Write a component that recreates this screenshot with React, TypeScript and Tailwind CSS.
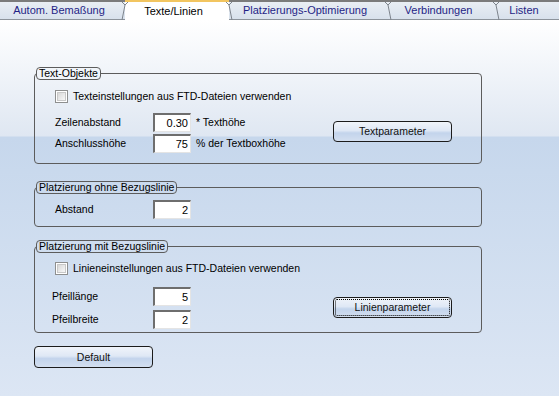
import React from "react";

type Tab = { label: string; width: string; active?: boolean; sep?: "left" | "right" };

const tabs: Tab[] = [
  { label: "Autom. Bemaßung", width: "w-[125px]" },
  { label: "Texte/Linien", width: "w-[104px]", active: true, sep: "left" },
  { label: "Platzierungs-Optimierung", width: "w-[159px]", sep: "right" },
  { label: "Verbindungen", width: "w-[108px]", sep: "right" },
  { label: "Listen", width: "w-[63px]", sep: "right" },
];

function TabSeparator({ dir }: { dir: "left" | "right" }) {
  // little "Y" on top of a slanted edge
  const bottomX = dir === "left" ? 1 : 7;
  return (
    <svg width="8" height="18" viewBox="0 0 8 18" className="absolute left-[-4px] top-0">
      <path d={`M1 0 L4 3 L7 0 M4 3 L${bottomX} 18`} stroke="#7d848c" strokeWidth="1" fill="none" />
    </svg>
  );
}

function TabBar() {
  return (
    <div className="flex h-[20px] text-[11px]">
      {tabs.map((t) => (
        <div
          key={t.label}
          className={
            "relative flex h-[20px] items-center justify-center pr-[7px] border-t-2 " +
            t.width +
            " " +
            (t.active
              ? "bg-white border-t-[#f2c560] text-black"
              : "border-t-[#7b7b7b] border-b border-b-[#8c939b] bg-[linear-gradient(to_bottom,#e9eef4,#d8e1ec)] text-[#1f1f86]")
          }
        >
          {t.sep && <TabSeparator dir={t.sep} />}
          <span className="leading-none">{t.label}</span>
        </div>
      ))}
    </div>
  );
}

function GroupBox({ title, className, children }: { title: string; className: string; children: React.ReactNode }) {
  return (
    <fieldset className={"ml-[34px] w-[448px] border border-[#5c5c5c] rounded-[4px] " + className}>
      <legend className="ml-[1px] h-[13px] px-[2px] border border-[#5c5c5c] rounded-[4px] leading-[11px]">{title}</legend>
      {children}
    </fieldset>
  );
}

function CheckRow({ label, className }: { label: string; className: string }) {
  return (
    <div className={"flex items-center gap-[5px] h-[13px] " + className}>
      <span className="w-[13px] h-[13px] border border-[#8e8f8f] p-[1px] bg-white">
        <span className="block w-full h-full border border-[#c8c8c8] bg-[linear-gradient(135deg,#d8d8d8,#f8f8f8)]" />
      </span>
      <span className="leading-none">{label}</span>
    </div>
  );
}

function NumField({ value }: { value: string }) {
  return (
    <div className="w-[38px] h-[19px] bg-white border-t-2 border-l-2 border-t-[#6e6e6e] border-l-[#6e6e6e] border-r border-b border-r-[#e4e4e4] border-b-[#e4e4e4] flex items-center justify-end pr-[2px] leading-none text-[11px]">
      {value}
    </div>
  );
}

function Row({ label, value, unit, labelW }: { label: string; value: string; unit?: string; labelW: string }) {
  return (
    <div className="flex items-center h-[19px]">
      <span className={"leading-none " + labelW}>{label}</span>
      <NumField value={value} />
      {unit && <span className="ml-[5px] leading-none">{unit}</span>}
    </div>
  );
}

function PushButton({ label, focused, className }: { label: string; focused?: boolean; className: string }) {
  return (
    <button
      className={
        "w-[119px] border border-[#1c1c1c] rounded-[4px] bg-[linear-gradient(to_bottom,#f0f4fa_0%,#dfe8f5_45%,#c3d4ec_58%,#d3dff0_100%)] text-[#101010] leading-none " +
        (focused ? "outline-1 outline-dotted outline-black outline-offset-[-3px] " : "") +
        className
      }
    >
      {label}
    </button>
  );
}

export default function App() {
  return (
    <div className="w-[559px] h-[396px] overflow-hidden font-['Liberation_Sans',Arial,sans-serif] text-[10.5px] text-black bg-white">
      <TabBar />
      <div className="h-[376px] flex flex-col bg-[linear-gradient(to_bottom,#ffffff_0px,#dfe7f2_116px,#c6d7ec_117px,#dce6f4_100%)]">
        <GroupBox title="Text-Objekte" className="mt-[47px] pb-[10px]">
          <CheckRow label="Texteinstellungen aus FTD-Dateien verwenden" className="ml-[20px] mt-[10px]" />
          <div className="flex mt-[10px] ml-[20px]">
            <div className="w-[278px] flex flex-col gap-[2px]">
              <Row label="Zeilenabstand" value="0.30" unit="* Texthöhe" labelW="w-[98px]" />
              <Row label="Anschlusshöhe" value="75" unit="% der Textboxhöhe" labelW="w-[98px]" />
            </div>
            <PushButton label="Textparameter" className="h-[21px] mt-[8px]" />
          </div>
        </GroupBox>

        <GroupBox title="Platzierung ohne Bezugslinie" className="mt-[17px] pb-[7px]">
          <div className="mt-[6px] ml-[20px]">
            <Row label="Abstand" value="2" labelW="w-[98px]" />
          </div>
        </GroupBox>

        <GroupBox title="Platzierung mit Bezugslinie" className="mt-[13px] pb-[3px]">
          <CheckRow label="Linieneinstellungen aus FTD-Dateien verwenden" className="ml-[20px] mt-[9px]" />
          <div className="flex mt-[12px] ml-[17px]">
            <div className="w-[281px] flex flex-col gap-[4px]">
              <Row label="Pfeillänge" value="5" labelW="w-[101px]" />
              <Row label="Pfeilbreite" value="2" labelW="w-[101px]" />
            </div>
            <PushButton label="Linienparameter" focused className="h-[21px] mt-[10px]" />
          </div>
        </GroupBox>

        <div className="mt-[13px] ml-[34px]">
          <PushButton label="Default" className="h-[22px]" />
        </div>
      </div>
    </div>
  );
}
